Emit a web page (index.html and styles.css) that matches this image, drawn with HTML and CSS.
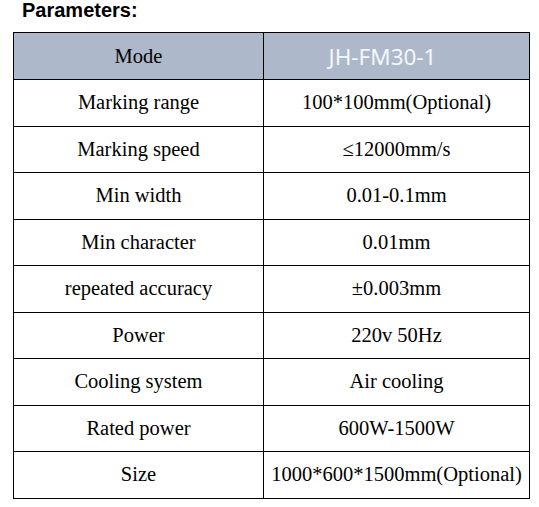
FILE: index.html
```html
<!DOCTYPE html>
<html>
<head>
<meta charset="utf-8">
<link rel="stylesheet" href="styles.css">
</head>
<body>
<div class="title">Parameters:</div>
<table class="params">
  <tr class="head">
    <td class="label">Mode</td>
    <td class="model">JH-FM30-1</td>
  </tr>
  <tr><td>Marking range</td><td>100*100mm(Optional)</td></tr>
  <tr><td>Marking speed</td><td>≤12000mm/s</td></tr>
  <tr><td>Min width</td><td>0.01-0.1mm</td></tr>
  <tr><td>Min character</td><td>0.01mm</td></tr>
  <tr><td>repeated accuracy</td><td>±0.003mm</td></tr>
  <tr><td>Power</td><td>220v 50Hz</td></tr>
  <tr><td>Cooling system</td><td>Air cooling</td></tr>
  <tr><td>Rated power</td><td>600W-1500W</td></tr>
  <tr><td>Size</td><td>1000*600*1500mm(Optional)</td></tr>
</table>
</body>
</html>
```
FILE: styles.css
```css
html, body {
  margin: 0;
  padding: 0;
  background: #ffffff;
}
.title {
  font-family: "Liberation Sans", Arial, sans-serif;
  font-weight: bold;
  font-size: 20px;
  line-height: 20px;
  height: 20px;
  padding-left: 22px;
  margin-bottom: 12px;
  color: #000;
}
.params {
  margin-left: 13px;
  width: 517px;
  border-collapse: collapse;
  table-layout: fixed;
  font-family: "Liberation Serif", "Times New Roman", serif;
  font-size: 20.5px;
  color: #000;
}
.params td {
  border: 1px solid #000;
  text-align: center;
  vertical-align: middle;
  padding: 0;
  height: 45.5px;
  white-space: nowrap;
}
.params td:first-child {
  width: 249px;
}
.params .head td {
  background: #adb9ca;
  height: 46px;
}
.params .model {
  font-family: "Noto Sans", "Open Sans", sans-serif;
  font-size: 22.5px;
  color: #f4f6f9;
  padding-right: 28px;
}
```
